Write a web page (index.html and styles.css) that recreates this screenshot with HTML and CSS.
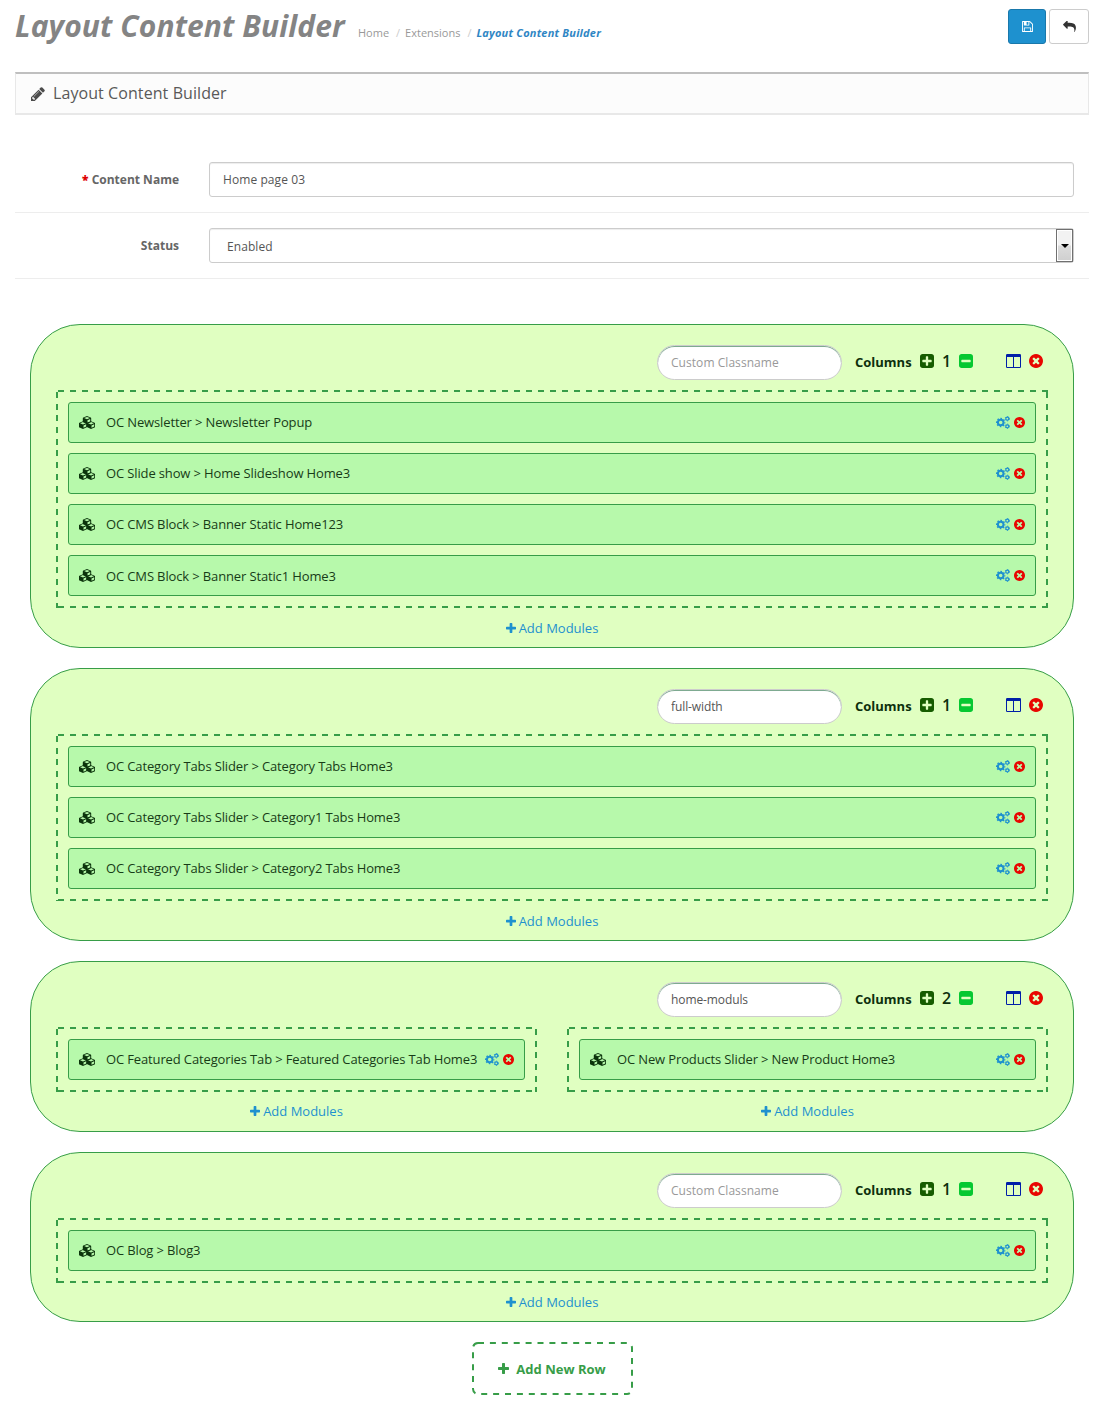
FILE: index.html
```html
<!DOCTYPE html>
<html lang="en">
<head>
<meta charset="utf-8">
<title>Layout Content Builder</title>
<link rel="stylesheet" href="styles.css">
</head>
<body>
<svg class="sprite">
  <symbol id="plus" viewBox="192 128 1408 1536"><path d="M1600 736v192q0 40-28 68t-68 28h-416v416q0 40-28 68t-68 28h-192q-40 0-68-28t-28-68v-416h-416q-40 0-68-28t-28-68v-192q0-40 28-68t68-28h416v-416q0-40 28-68t68-28h192q40 0 68 28t28 68v416h416q40 0 68 28t28 68z"/></symbol>
  <symbol id="plus-square" viewBox="128 128 1536 1536"><path d="M1408 960v-128q0-26-19-45t-45-19h-320v-320q0-26-19-45t-45-19h-128q-26 0-45 19t-19 45v320h-320q-26 0-45 19t-19 45v128q0 26 19 45t45 19h320v320q0 26 19 45t45 19h128q26 0 45-19t19-45v-320h320q26 0 45-19t19-45zm256-544v960q0 119-84.5 203.5t-203.5 84.5h-960q-119 0-203.5-84.5t-84.5-203.5v-960q0-119 84.5-203.5t203.5-84.5h960q119 0 203.5 84.5t84.5 203.5z"/></symbol>
  <symbol id="minus-square" viewBox="128 128 1536 1536"><path d="M1408 960v-128q0-26-19-45t-45-19h-896q-26 0-45 19t-19 45v128q0 26 19 45t45 19h896q26 0 45-19t19-45zm256-544v960q0 119-84.5 203.5t-203.5 84.5h-960q-119 0-203.5-84.5t-84.5-203.5v-960q0-119 84.5-203.5t203.5-84.5h960q119 0 203.5 84.5t84.5 203.5z"/></symbol>
  <symbol id="times-circle" viewBox="128 128 1536 1536"><path d="M1277 1122q0-26-19-45l-181-181 181-181q19-19 19-45 0-27-19-46l-90-90q-19-19-46-19-26 0-45 19l-181 181-181-181q-19-19-45-19-27 0-46 19l-90 90q-19 19-19 46 0 26 19 45l181 181-181 181q-19 19-19 45 0 27 19 46l90 90q19 19 46 19 26 0 45-19l181-181 181 181q19 19 45 19 27 0 46-19l90-90q19-19 19-46zm387-226q0 209-103 385.5t-279.5 279.5-385.5 103-385.5-103-279.5-279.5-103-385.5 103-385.5 279.5-279.5 385.5-103 385.5 103 279.5 279.5 103 385.5z"/></symbol>
  <symbol id="columns" viewBox="0 0 15 14"><path fill-rule="evenodd" d="M1.2 0h12.6q1.2 0 1.2 1.2v11.6q0 1.2-1.2 1.2H1.2Q0 14 0 12.800V1.200Q0 0 1.200 0zM1 3v10h6V3zM8 3v10h6V3z"/></symbol>
  <symbol id="reply" viewBox="0 128 1792 1536"><path transform="matrix(-1 0 0 1 1792 0)" d="M1792 640q0 26-19 45l-512 512q-19 19-45 19t-45-19-19-45v-256h-224q-98 0-175.5 6t-154 21.500-133 42.500-105.500 69.500-80 101-48.500 138.500-17.500 181q0 55 5 123 0 6 2.500 23.500t2.500 26.500q0 15-8.500 25t-23.500 10q-16 0-28-17-7-9-13-22t-13.500-30-10.500-24q-127-285-127-451 0-199 53-333 162-403 875-403h224v-256q0-26 19-45t45-19 45 19l512 512q19 19 19 45z"/></symbol>
  <symbol id="save" viewBox="128 128 1536 1536"><path d="M512 1536h768v-384h-768v384zm896 0h128v-896q0-14-10-38.500t-20-34.500l-281-281q-10-10-34-20t-39-10v416q0 40-28 68t-68 28h-576q-40 0-68-28t-28-68v-416h-128v1280h128v-416q0-40 28-68t68-28h832q40 0 68 28t28 68v416zm-384-928v-320q0-13-9.500-22.500t-22.500-9.500h-192q-13 0-22.500 9.500t-9.500 22.500v320q0 13 9.500 22.500t22.500 9.500h192q13 0 22.500-9.500t9.500-22.500zm640 32v928q0 40-28 68t-68 28h-1344q-40 0-68-28t-28-68v-1344q0-40 28-68t68-28h928q40 0 88 20t76 48l280 280q28 28 48 76t20 88z"/></symbol>
  <symbol id="pencil" viewBox="128 128 1536 1536"><path d="M491 1536l91-91-235-235-91 91v107h128v128h107zm523-928q0-22-22-22-10 0-17 7l-542 542q-7 7-7 17 0 22 22 22 10 0 17-7l542-542q7-7 7-17zm-54-192l416 416-832 832h-416v-416zm683 96q0 53-37 90l-166 166-416-416 166-165q36-38 90-38 53 0 91 38l235 234q37 39 37 91z"/></symbol>
  <symbol id="cubes" viewBox="0 0 16 13">
    <g id="cube" fill-rule="evenodd"><path d="M8 0l3.600 1.500q.6.300.6.900v3.500L8 7.800 3.800 5.900V2.400q0-.6.600-.9zM8 .9L5.100 2.100 8 3.300l2.900-1.200zM8.500 4.200v2.400l2.700-1.200V3.100z"/></g>
    <use href="#cube" x="-4" y="5.200"/><use href="#cube" x="4" y="5.200"/>
  </symbol>
  <symbol id="cogs" viewBox="0 0 14 13">
    <g fill="none" stroke="currentColor">
      <circle cx="4.700" cy="6.500" r="2.800" stroke-width="2"/>
      <circle cx="4.700" cy="6.500" r="4.100" stroke-width="1.200" stroke-dasharray="1.610 1.610" stroke-dashoffset=".805"/>
      <circle cx="11.300" cy="2.700" r="1.500" stroke-width="1.200"/>
      <circle cx="11.300" cy="2.700" r="2.200" stroke-width=".9" stroke-dasharray="1.150 1.150"/>
      <circle cx="11.300" cy="10.300" r="1.500" stroke-width="1.200"/>
      <circle cx="11.300" cy="10.300" r="2.200" stroke-width=".9" stroke-dasharray="1.150 1.150"/>
    </g>
  </symbol>
</svg>

<header class="page-header">
  <h1>Layout Content Builder</h1>
  <nav class="breadcrumb"><a>Home</a><i>/</i><a>Extensions</a><i>/</i><a class="current">Layout Content Builder</a></nav>
  <div class="actions">
    <button class="btn primary" aria-label="Save"><svg width="11" height="11"><use href="#save"/></svg></button>
    <button class="btn" aria-label="Back"><svg width="13" height="11"><use href="#reply"/></svg></button>
  </div>
</header>

<main>
  <div class="panel-heading"><svg width="14" height="14"><use href="#pencil"/></svg><h2>Layout Content Builder</h2></div>
  <form>
    <div class="form-group"><label><b>*</b> Content Name</label><div class="control">Home page 03</div></div>
    <div class="form-group"><label>Status</label><div class="control select">Enabled<span class="drop"></span></div></div>
  </form>

  <div class="rows">
    <section class="row">
      <div class="tools"><input placeholder="Custom Classname"><strong>Columns</strong><svg class="add" width="14" height="14"><use href="#plus-square"/></svg><span class="count">1</span><svg class="sub" width="14" height="14"><use href="#minus-square"/></svg><svg class="split" width="15" height="14"><use href="#columns"/></svg><svg class="del" width="14" height="14"><use href="#times-circle"/></svg></div>
      <div class="cols">
        <div class="col">
          <div class="drop-zone">
            <div class="module"><svg class="cubes" width="16" height="13"><use href="#cubes"/></svg><span>OC Newsletter &gt; Newsletter Popup</span><svg class="cogs" width="14" height="13"><use href="#cogs"/></svg><svg class="del" width="11" height="11"><use href="#times-circle"/></svg></div>
            <div class="module"><svg class="cubes" width="16" height="13"><use href="#cubes"/></svg><span>OC Slide show &gt; Home Slideshow Home3</span><svg class="cogs" width="14" height="13"><use href="#cogs"/></svg><svg class="del" width="11" height="11"><use href="#times-circle"/></svg></div>
            <div class="module"><svg class="cubes" width="16" height="13"><use href="#cubes"/></svg><span>OC CMS Block &gt; Banner Static Home123</span><svg class="cogs" width="14" height="13"><use href="#cogs"/></svg><svg class="del" width="11" height="11"><use href="#times-circle"/></svg></div>
            <div class="module"><svg class="cubes" width="16" height="13"><use href="#cubes"/></svg><span>OC CMS Block &gt; Banner Static1 Home3</span><svg class="cogs" width="14" height="13"><use href="#cogs"/></svg><svg class="del" width="11" height="11"><use href="#times-circle"/></svg></div>
          </div>
          <a class="add-module"><svg width="10" height="11"><use href="#plus"/></svg>Add Modules</a>
        </div>
      </div>
    </section>

    <section class="row">
      <div class="tools"><input value="full-width"><strong>Columns</strong><svg class="add" width="14" height="14"><use href="#plus-square"/></svg><span class="count">1</span><svg class="sub" width="14" height="14"><use href="#minus-square"/></svg><svg class="split" width="15" height="14"><use href="#columns"/></svg><svg class="del" width="14" height="14"><use href="#times-circle"/></svg></div>
      <div class="cols">
        <div class="col">
          <div class="drop-zone">
            <div class="module"><svg class="cubes" width="16" height="13"><use href="#cubes"/></svg><span>OC Category Tabs Slider &gt; Category Tabs Home3</span><svg class="cogs" width="14" height="13"><use href="#cogs"/></svg><svg class="del" width="11" height="11"><use href="#times-circle"/></svg></div>
            <div class="module"><svg class="cubes" width="16" height="13"><use href="#cubes"/></svg><span>OC Category Tabs Slider &gt; Category1 Tabs Home3</span><svg class="cogs" width="14" height="13"><use href="#cogs"/></svg><svg class="del" width="11" height="11"><use href="#times-circle"/></svg></div>
            <div class="module"><svg class="cubes" width="16" height="13"><use href="#cubes"/></svg><span>OC Category Tabs Slider &gt; Category2 Tabs Home3</span><svg class="cogs" width="14" height="13"><use href="#cogs"/></svg><svg class="del" width="11" height="11"><use href="#times-circle"/></svg></div>
          </div>
          <a class="add-module"><svg width="10" height="11"><use href="#plus"/></svg>Add Modules</a>
        </div>
      </div>
    </section>

    <section class="row compact">
      <div class="tools"><input value="home-moduls"><strong>Columns</strong><svg class="add" width="14" height="14"><use href="#plus-square"/></svg><span class="count">2</span><svg class="sub" width="14" height="14"><use href="#minus-square"/></svg><svg class="split" width="15" height="14"><use href="#columns"/></svg><svg class="del" width="14" height="14"><use href="#times-circle"/></svg></div>
      <div class="cols">
        <div class="col">
          <div class="drop-zone">
            <div class="module"><svg class="cubes" width="16" height="13"><use href="#cubes"/></svg><span>OC Featured Categories Tab &gt; Featured Categories Tab Home3</span><svg class="cogs" width="14" height="13"><use href="#cogs"/></svg><svg class="del" width="11" height="11"><use href="#times-circle"/></svg></div>
          </div>
          <a class="add-module"><svg width="10" height="11"><use href="#plus"/></svg>Add Modules</a>
        </div>
        <div class="col">
          <div class="drop-zone">
            <div class="module"><svg class="cubes" width="16" height="13"><use href="#cubes"/></svg><span>OC New Products Slider &gt; New Product Home3</span><svg class="cogs" width="14" height="13"><use href="#cogs"/></svg><svg class="del" width="11" height="11"><use href="#times-circle"/></svg></div>
          </div>
          <a class="add-module"><svg width="10" height="11"><use href="#plus"/></svg>Add Modules</a>
        </div>
      </div>
    </section>

    <section class="row last">
      <div class="tools"><input placeholder="Custom Classname"><strong>Columns</strong><svg class="add" width="14" height="14"><use href="#plus-square"/></svg><span class="count">1</span><svg class="sub" width="14" height="14"><use href="#minus-square"/></svg><svg class="split" width="15" height="14"><use href="#columns"/></svg><svg class="del" width="14" height="14"><use href="#times-circle"/></svg></div>
      <div class="cols">
        <div class="col">
          <div class="drop-zone">
            <div class="module"><svg class="cubes" width="16" height="13"><use href="#cubes"/></svg><span>OC Blog &gt; Blog3</span><svg class="cogs" width="14" height="13"><use href="#cogs"/></svg><svg class="del" width="11" height="11"><use href="#times-circle"/></svg></div>
          </div>
          <a class="add-module"><svg width="10" height="11"><use href="#plus"/></svg>Add Modules</a>
        </div>
      </div>
    </section>
  </div>
  <button class="add-row"><svg class="outline" width="161" height="53"><rect x="1" y="1" width="159" height="51" rx="5"/></svg><svg width="11" height="12"><use href="#plus"/></svg>Add New Row</button>
</main>
</body>
</html>
```
FILE: styles.css
```css
* { box-sizing: border-box; }
body {
  margin: 0;
  min-height: 1410px;
  background: #fff;
  color: #666;
  font: 13px/20px "Open Sans", sans-serif;
}
.sprite { display: none; }
svg { fill: currentColor; flex: none; display: block; }
button, input { font: inherit; }

.page-header { display: flex; height: 72px; padding: 0 7px 0 15px; align-items: flex-start; }
h1 { margin: 6px 0 0; font-size: 30px; line-height: 40px; font-weight: 700; font-style: italic; letter-spacing: .09px; color: #848484; width: 343px; white-space: nowrap; }
.breadcrumb { display: flex; margin-top: 23px; font-size: 11px; color: #999; white-space: nowrap; }
.breadcrumb i { font-style: normal; color: #ccc; width: 16px; padding-left: 2px; text-align: center; }
.breadcrumb .current { color: #2f86c4; font-weight: 700; font-style: italic; letter-spacing: .2px; }
.actions { display: flex; gap: 3px; margin: 9px 0 0 auto; }
.btn { display: flex; align-items: center; justify-content: center; width: 40px; height: 35px; padding: 0; border: 1px solid #ccc; border-radius: 3px; background: #fff; color: #333; }
.btn.primary { width: 38px; background: #1e91cf; border-color: #1978ab; color: #fff; }

main { padding: 0 7px 0 15px; }
.panel-heading { display: flex; align-items: center; height: 43px; padding: 0 15px; gap: 8px; border: 1px solid #e8e8e8; border-top: 2px solid #bfbfbf; border-bottom-width: 2px; background: #fcfcfc; color: #4c4c4c; }
h2 { margin: 0 0 2px; font-size: 16px; font-weight: 400; letter-spacing: .08px; color: #595959; }
form { padding-top: 32px; }
.form-group { display: flex; height: 66px; padding: 15px 15px 15px 0; border-bottom: 1px solid #ededed; }
.form-group label { width: 164px; margin-right: 30px; padding-top: 8px; font-weight: 700; font-size: 12px; text-align: right; }
.form-group b { color: #d00; }
.control { display: flex; flex: 1; justify-content: space-between; padding: 7px 13px; border: 1px solid #ccc; border-radius: 3px; box-shadow: inset 0 1px 1px rgba(0,0,0,.075); font-size: 12px; line-height: 20px; letter-spacing: .08px; color: #555; }
.control.select { padding: 0 0 0 17px; line-height: 35px; }
.drop { width: 17px; height: 33px; border: 1px solid #707070; box-shadow: inset 0 0 0 1px #fff; background: linear-gradient(#f2f2f2 49%, #dcdcdc 51%, #cfcfcf); display: flex; align-items: center; justify-content: center; }
.drop::before { content: ""; border: 4px solid transparent; border-top-color: #000; border-bottom: 0; }

.rows { display: flex; flex-direction: column; gap: 20px; padding: 45px 15px 0; }
.row { padding: 21px 25px 0; border: 1px solid #379d48; border-radius: 50px; background: #e0ffc1; }
.tools { display: flex; align-items: flex-start; justify-content: flex-end; height: 44px; padding-right: 5px; color: #0d300d; }
.tools input { width: 185px; height: 35px; margin: -1px 13px 0 0; padding: 0 13px; border: 1px solid #ccc; border-radius: 18px; box-shadow: inset 0 1px 1px rgba(0,0,0,.075), inset 0 1px 0 #87b79c; background: #fff; color: #555; font-size: 12px; letter-spacing: .05px; }
.tools input[value] { letter-spacing: -.1px; }
.tools input::placeholder { color: #999; }
.tools strong { width: 65px; padding-top: 6px; font-size: 13px; line-height: 20px; }
.tools svg { margin-top: 8px; }
.count { width: 25px; padding-top: 5px; font-size: 16px; font-weight: 600; text-align: center; }
.add { color: #165c00; }
.sub { color: #06c831; }
.tools .split { color: #001fa8; margin: 8px 8px 0 33px; }
.del { color: #e80600; }
.cols { display: grid; grid-auto-flow: column; grid-auto-columns: 1fr; gap: 30px; }
/* Dashes are 6px on, 6px off, which a native dashed border does not give at this width. */
.drop-zone {
  --across: repeating-linear-gradient(90deg, transparent 0 2px, #379d48 2px 8px, transparent 8px 12px);
  --down: repeating-linear-gradient(transparent 0 2px, #379d48 2px 8px, transparent 8px 11.700px);
  display: flex;
  flex-direction: column;
  gap: 10px;
  padding: 12px;
  background: var(--across) top / 100% 2px no-repeat, var(--across) bottom / 100% 2px no-repeat, var(--down) left / 2px 100% no-repeat, var(--down) right / 2px 100% no-repeat;
}
.module { display: flex; align-items: center; height: 41px; padding: 0 10px; border: 1px solid #379d48; border-radius: 3px; background: #b7f9ab; color: #173c17; white-space: nowrap; }
.module span { flex: 1; margin: -2px 0 0 11px; letter-spacing: -.135px; }
.module:nth-child(4) span { margin-top: 0; }
.cubes { color: #0b330b; }
.cogs { margin-right: 4px; color: #1e91cf; }
.add-module { display: flex; align-items: center; justify-content: center; gap: 3px; height: 39px; color: #1e91cf; }
.add-module svg { margin-top: 1px; }
.compact .add-module { padding-bottom: 1px; }
.last .add-module { height: 38px; }
.add-row { position: relative; display: flex; align-items: center; justify-content: center; gap: 7px; width: 161px; height: 53px; margin: 20px auto 0; padding: 0; border: 0; background: #fff; color: #379d48; font-weight: 700; }
.outline { position: absolute; inset: 0; fill: none; stroke: #379d48; stroke-width: 2; stroke-dasharray: 6 5.900; }
```
